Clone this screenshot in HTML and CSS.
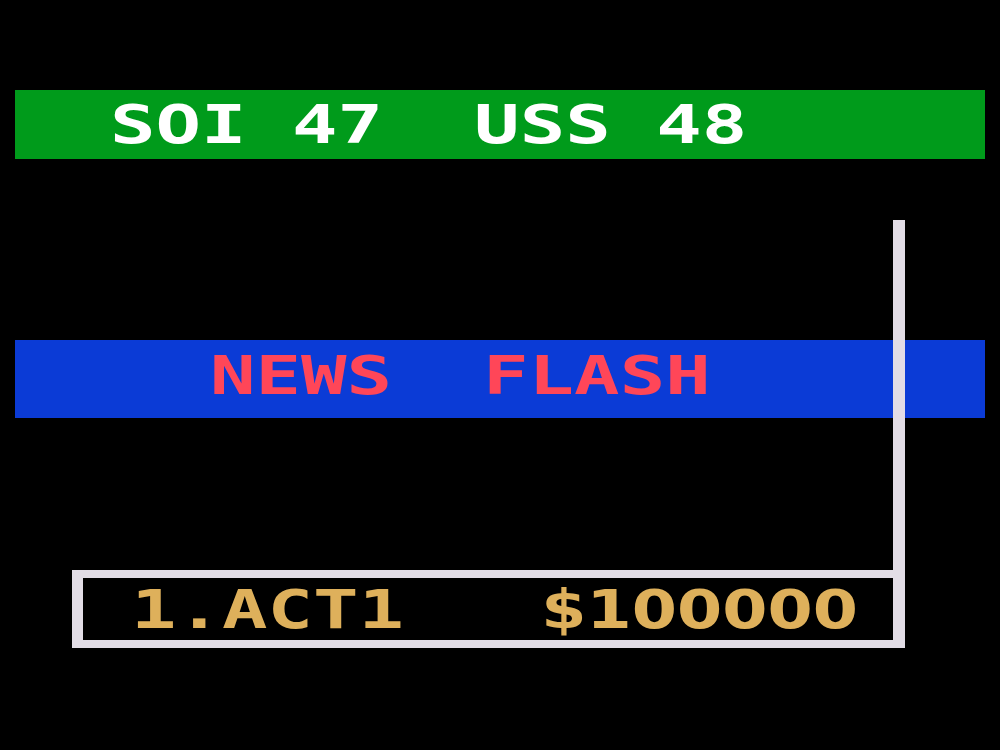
FILE: index.html
```html
<!DOCTYPE html>
<html lang="en">
<head>
    <meta charset="UTF-8">
    <meta name="viewport" content="width=device-width, initial-scale=1.0">
    <title>news flash</title>
    <link rel="stylesheet" href="styles.css">
</head>
<body>
    <div class="screen">
        <div class="bar score"><span class="txt">SOI 47  USS 48</span></div>

        <div class="bar news"><span class="txt">NEWS  FLASH</span></div>

        <div class="player"><span class="txt">1.ACT1   <span class="money">$100000</span></span></div>
    </div>
</body>
</html>
```

FILE: styles.css
```css
/* 画面 */
*{
    padding: 0;
    margin: 0;
}
body{
    background-color: #000;
}
.screen{
    width: 1000px;
    height: 750px;
    padding-top: 90px;
    box-sizing: border-box;
    display: flex;
    flex-direction: column;
    align-items: flex-start;
}

/* 文字：等宽粗体横向拉宽，一格约 45.5px */
.txt{
    display: inline-block;
    font-family: "DejaVu Sans Mono", "Liberation Mono", monospace;
    font-weight: bold;
    font-size: 54px;
    line-height: 54px;
    white-space: pre;
    transform: scaleX(1.4);
    transform-origin: left center;
}
/* 等宽字体的 0 带点，金额换成无点的 0，字宽再缩回一格 */
.money{
    display: inline-block;
    font-family: "DejaVu Sans", "Liberation Sans", sans-serif;
    transform: scaleX(0.86);
    transform-origin: left center;
}

/* 横条 */
.bar{
    width: 970px;
    margin-left: 15px;
    box-sizing: border-box;
}
.score{
    height: 69px;
    padding: 8px 0 0 95px;
    background-color: #009b1b;
    color: #fff;
}
.news{
    height: 78px;
    margin-top: 181px;
    padding: 9px 0 0 195px;
    background-color: #0b3bd6;
    color: #ff4658;
}

/* 玩家框 右边框往上延伸成竖线 */
.player{
    position: relative;
    width: 833px;
    height: 78px;
    margin: 152px 0 0 72px;
    box-sizing: border-box;
    border: 8px solid #e2dde6;
    border-left-width: 11px;
    border-right-width: 12px;
    padding: 5px 0 0 48px;
    color: #deb05b;
}
.player::after{
    content: "";
    position: absolute;
    right: -12px;
    top: -358px;
    width: 12px;
    height: 358px;
    background-color: #e2dde6;
}
```
